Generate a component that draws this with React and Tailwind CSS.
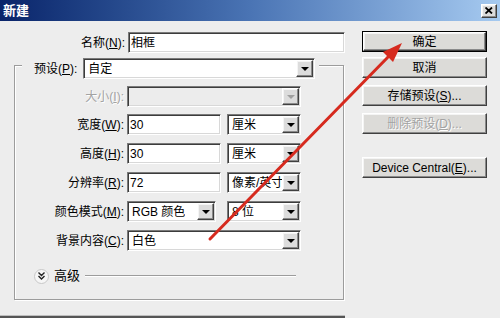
import React from 'react';

const sunken =
  'border border-t-[#7a7a7a] border-l-[#7a7a7a] border-b-white border-r-white shadow-[inset_1px_1px_0_#3c3c3c,inset_-1px_-1px_0_#d8d8d8]';
const raised =
  'border border-t-white border-l-white border-b-[#404040] border-r-[#404040] shadow-[inset_-1px_-1px_0_#8a8a8a,inset_1px_1px_0_#f4f4f4]';

function Arrow({ disabled }) {
  return (
    <div className={`${raised} w-[17px] h-[17px] mr-[1px] bg-[#dcdcdc] flex items-center justify-center`}>
      <div
        className={`w-0 h-0 border-l-[4px] border-r-[4px] border-t-[4px] border-l-transparent border-r-transparent ${
          disabled ? 'border-t-[#a0a0a0]' : 'border-t-black'
        }`}
      />
    </div>
  );
}

function Field({ w, value }) {
  return (
    <div className={`${sunken} ${w} h-[21px] bg-white flex items-center pl-[2px]`}>{value}</div>
  );
}

function Select({ w, value, disabled }) {
  return (
    <div
      className={`${sunken} ${w} h-[21px] flex items-center justify-between pl-[4px] ${
        disabled ? 'bg-[#ececec]' : 'bg-white'
      }`}
    >
      <span className="whitespace-nowrap overflow-hidden">{value}</span>
      <Arrow disabled={disabled} />
    </div>
  );
}

function Label({ children, disabled }) {
  return (
    <div
      className={`w-[109px] text-right whitespace-nowrap ${
        disabled ? 'text-[#a3a3a3] [text-shadow:1px_1px_0_#fff]' : ''
      }`}
    >
      {children}
    </div>
  );
}

function Button({ children, isDefault, disabled, className = '' }) {
  const inner = (
    <div
      className={`${raised} h-full w-full bg-[#dcdbd8] flex items-center justify-center whitespace-nowrap ${
        disabled ? 'text-[#a3a3a3] [text-shadow:1px_1px_0_#fff]' : ''
      }`}
    >
      {children}
    </div>
  );
  return (
    <div className={`w-[125px] h-[21px] ${isDefault ? 'border border-black' : ''} ${className}`}>{inner}</div>
  );
}

export default function App() {
  return (
    <div className="relative w-[500px] h-[318px] overflow-hidden bg-[#ededed] text-[12px] leading-[14px] text-black font-['Liberation_Sans','Noto_Sans_CJK_SC',sans-serif]">
      {/* title bar */}
      <div className="h-[21px] flex items-center justify-between pl-[3px] pr-[3px] bg-gradient-to-r from-[#0a246a] via-[#4a74b4] to-[#a6caf0]">
        <span className="text-white font-bold text-[13px]">新建</span>
        <div className={`${raised} w-[16px] h-[14px] bg-[#dcdcdc] flex items-center justify-center`}>
          <svg width="8" height="7" viewBox="0 0 8 7">
            <path d="M0.5 0.5 L7 6.5 M7 0.5 L0.5 6.5" stroke="black" strokeWidth="1.8" />
          </svg>
        </div>
      </div>

      <div className="flex">
        {/* left */}
        <div className="w-[346px]">
          <div className="mt-[11px] flex items-center h-[21px]">
            <div className="w-[125px] text-right">
              名称(<u>N</u>):
            </div>
            <div className="ml-[3px]">
              <Field w="w-[217px]" value="相框" />
            </div>
          </div>

          <div className="mt-[12px] ml-[14px] w-[330px] h-[235px] border border-[#9c9c9c] shadow-[inset_1px_1px_0_#fff,1px_1px_0_#fff]">
            <div className="-mt-[8px] ml-[7px] w-fit pl-[12px] pr-[4px] flex items-center bg-[#ededed] h-[21px]">
              <span className="mr-[6px]">
                预设(<u>P</u>):
              </span>
              <Select w="w-[232px]" value="自定" />
            </div>

            <div className="mt-[7px] flex items-center">
              <Label disabled>
                大小(<u>I</u>):
              </Label>
              <div className="ml-[3px]">
                <Select w="w-[174px]" value="" disabled />
              </div>
            </div>

            <div className="mt-[7px] flex items-center">
              <Label>
                宽度(<u>W</u>):
              </Label>
              <div className="ml-[3px] flex gap-[6px]">
                <Field w="w-[94px]" value="30" />
                <Select w="w-[74px]" value="厘米" />
              </div>
            </div>

            <div className="mt-[8px] flex items-center">
              <Label>
                高度(<u>H</u>):
              </Label>
              <div className="ml-[3px] flex gap-[6px]">
                <Field w="w-[94px]" value="30" />
                <Select w="w-[74px]" value="厘米" />
              </div>
            </div>

            <div className="mt-[8px] flex items-center">
              <Label>
                分辨率(<u>R</u>):
              </Label>
              <div className="ml-[3px] flex gap-[6px]">
                <Field w="w-[94px]" value="72" />
                <Select w="w-[74px]" value="像素/英寸" />
              </div>
            </div>

            <div className="mt-[8px] flex items-center">
              <Label>
                颜色模式(<u>M</u>):
              </Label>
              <div className="ml-[3px] flex gap-[11px]">
                <Select w="w-[89px]" value="RGB 颜色" />
                <Select w="w-[74px]" value="8 位" />
              </div>
            </div>

            <div className="mt-[8px] flex items-center">
              <Label>
                背景内容(<u>C</u>):
              </Label>
              <div className="ml-[3px]">
                <Select w="w-[174px]" value="白色" />
              </div>
            </div>

            <div className="mt-[17px] ml-[19px] mr-[47px] flex items-center h-[16px]">
              <div className="w-[15px] h-[15px] rounded-full bg-[#f6f6f6] border border-[#c8c8c8] flex items-center justify-center">
                <svg width="7" height="8" viewBox="0 0 7 8">
                  <path d="M0.5 0.5 L3.5 3.5 L6.5 0.5 M0.5 4 L3.5 7 L6.5 4" fill="none" stroke="#222" strokeWidth="1.4" />
                </svg>
              </div>
              <span className="ml-[5px] text-[13px]">高级</span>
              <div className="ml-[5px] flex-1 h-[2px] border-t border-[#9c9c9c] border-b border-b-white" />
            </div>
          </div>
        </div>

        {/* right buttons */}
        <div className="ml-[16px] pt-[10px] flex flex-col">
          <Button isDefault>确定</Button>
          <Button className="mt-[5px]">取消</Button>
          <Button className="mt-[7px]">
            存储预设(<u>S</u>)...
          </Button>
          <Button className="mt-[7px]" disabled>
            删除预设(<u>D</u>)...
          </Button>
          <Button className="mt-[23px]">
            Device Central(<u>E</u>)...
          </Button>
        </div>
      </div>

      <div className="absolute left-0 bottom-0 w-[345px] h-[3px] bg-[#555] border-t border-[#bdbdbd]" />

      {/* red annotation arrow */}
      <svg className="absolute left-0 top-0 pointer-events-none" width="500" height="318">
        <line x1="210" y1="239" x2="390" y2="55" stroke="#d62a1e" strokeWidth="3" strokeLinecap="round" />
        <polygon points="402,43 393,62 383,52" fill="#d62a1e" />
      </svg>
    </div>
  );
}
